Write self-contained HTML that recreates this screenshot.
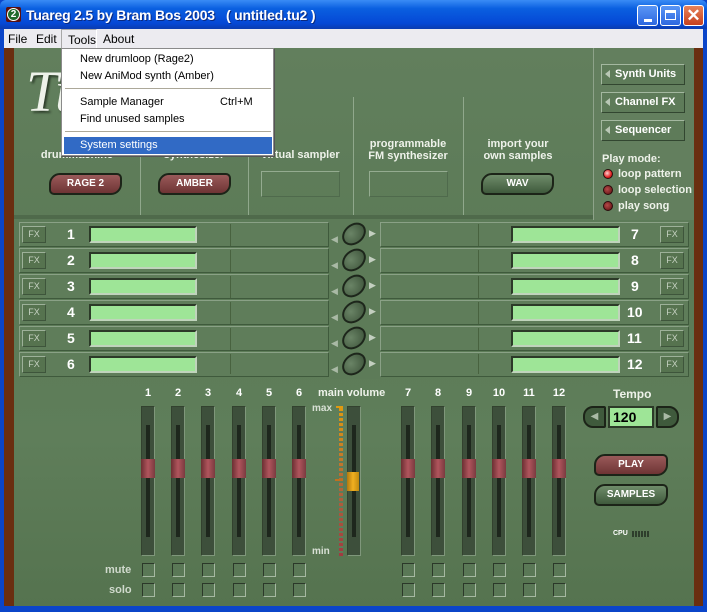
<!DOCTYPE html>
<html><head><meta charset="utf-8"><style>
*{margin:0;padding:0;box-sizing:border-box}
body{width:707px;height:612px;position:relative;overflow:hidden;background:#0b45c9;font-family:"Liberation Sans",sans-serif}
.a{position:absolute}
.t{color:#eef2ea;font-weight:bold;font-size:11px;text-align:center;white-space:nowrap}
.vl{position:absolute;width:1px;background:#90a88c;top:97px;height:118px}
.pill{position:absolute;height:22px;border:2px solid #1c2418;border-radius:11px 5px 11px 5px;color:#fff;font-weight:bold;font-size:10px;text-align:center;line-height:18px}
.red{background:linear-gradient(#9a5a5a,#6e3434)}
.grn{background:linear-gradient(#6f8c6a,#3f5a3c)}
.box{position:absolute;border:1px solid #94ab90;border-bottom-color:#4f6a4c;border-right-color:#4f6a4c}
.row{position:absolute;height:25px;border:1px solid #8aa186;border-right-color:#3f5a3c;border-bottom-color:#3f5a3c;background:#5f7d5a}
.fx{position:absolute;width:24px;height:17px;border:1px solid #9db199;border-right-color:#3e553b;border-bottom-color:#3e553b;color:#c6d2c2;font-size:9px;text-align:center;line-height:15px;background:#56734f}
.gf{position:absolute;height:17px;background:#9ee597;border:2px solid #2c3a28;border-right-color:#c0d4bc;border-bottom-color:#c0d4bc}
.num{position:absolute;color:#fff;font-weight:bold;font-size:14px}
.knob{position:absolute;width:26px;height:20px;border:2px solid #1d261b;border-radius:50%;background:radial-gradient(circle at 40% 35%,#6a8466,#3b5138);transform:rotate(-40deg)}
.track{position:absolute;width:14px;top:406px;height:150px;background:#3d4f3b;border:1px solid #7f977b;border-top-color:#33422f;border-left-color:#33422f}
.track:after{content:"";position:absolute;left:4px;top:18px;width:4px;height:112px;background:#1e271d}
.fk{position:absolute;width:14px;height:19px;top:459px;background:linear-gradient(90deg,#6c2f33,#b0555d,#7a3a3f);z-index:2}
.cb{position:absolute;width:13px;height:14px;border:1px solid #2b3829;border-right-color:#a5b8a1;border-bottom-color:#a5b8a1;background:#5a7856}
.fn{position:absolute;top:387px;color:#fff;font-weight:bold;font-size:11px;width:20px;text-align:center}
.mi{position:absolute;left:80px;font-size:11px;color:#000}
.sb{position:absolute;left:601px;width:84px;height:21px;border:1px solid #a4b8a0;border-right-color:#324630;border-bottom-color:#324630;color:#fff;font-weight:bold;font-size:11px;line-height:19px;padding-left:13px;background:#5e7b59}
.sb:before{content:"";position:absolute;left:3px;top:5px;border:4px solid transparent;border-right:5px solid #b9c7b5;border-left:0}
.led{position:absolute;left:603px;width:10px;height:10px;border-radius:50%;background:radial-gradient(circle at 40% 40%,#b54a4a,#5a0c0c);border:1px solid #2a0a0a}
</style></head><body>
<div class="a" style="left:0;top:0;width:707px;height:29px;background:linear-gradient(#3a8cf5,#0a5fe0 30%,#0548d6 80%,#0a3cb0);border-radius:6px 6px 0 0"></div>
<div class="a" style="left:6px;top:7px;width:15px;height:15px;background:#5a1010;border-radius:2px"></div>
<div class="a" style="left:7px;top:8px;width:13px;height:13px;border-radius:50%;background:#1f6a2a;border:1px solid #fff;color:#fff;font-size:10px;font-weight:bold;text-align:center;line-height:11px">2</div>
<div class="a" style="left:26px;top:7px;color:#fff;font-weight:bold;font-size:14px;letter-spacing:-0.2px;white-space:pre;text-shadow:1px 1px #0a2a80">Tuareg 2.5 by Bram Bos 2003   ( untitled.tu2 )</div>
<div class="a" style="left:637px;top:5px;width:21px;height:21px;border:1px solid #fff;border-radius:3px;background:linear-gradient(#5a96f5,#2d67e0)"><div class="a" style="left:6px;top:13px;width:8px;height:3px;background:#fff"></div></div>
<div class="a" style="left:660px;top:5px;width:21px;height:21px;border:1px solid #fff;border-radius:3px;background:linear-gradient(#5a96f5,#2d67e0)"><div class="a" style="left:4px;top:4px;width:11px;height:10px;border:1px solid #fff;border-top-width:3px"></div></div>
<div class="a" style="left:683px;top:5px;width:21px;height:21px;border:1px solid #fff;border-radius:3px;background:linear-gradient(#e8835a,#c5401e);color:#fff;font-size:17px;font-weight:bold;text-align:center;line-height:19px">✕</div>
<div class="a" style="left:4px;top:29px;width:699px;height:19px;background:#ecebf0"></div>
<div class="a" style="left:8px;top:32px;font-size:12px">File</div>
<div class="a" style="left:36px;top:32px;font-size:12px">Edit</div>
<div class="a" style="left:61px;top:29px;width:36px;height:19px;border:1px solid #a8a8a8;border-right-color:#fff;border-bottom:none;font-size:12px;padding:3px 0 0 6px">Tools</div>
<div class="a" style="left:103px;top:32px;font-size:12px">About</div>
<div class="a" style="left:4px;top:48px;width:10px;height:558px;background:#6a2e10"></div>
<div class="a" style="left:694px;top:48px;width:9px;height:558px;background:#6a2e10"></div>
<div class="a" style="left:14px;top:48px;width:680px;height:558px;background:linear-gradient(#627f5d,#5b7a56 40%,#5f7e5a 70%,#55734f)"></div>
<div class="a" style="left:593px;top:48px;width:101px;height:172px;background:#637f5e;border-left:1px solid #8ea38a"></div>
<div class="a" style="left:14px;top:215px;width:579px;height:4px;background:#4f6a4b"></div>
<div class="a" style="left:26px;top:58px;font-family:'Liberation Serif',serif;font-style:italic;font-size:58px;color:#eef2ea;text-shadow:2px 2px 2px #2d3d2a">Tu</div>
<div class="vl" style="left:140px"></div><div class="vl" style="left:248px"></div><div class="vl" style="left:353px"></div><div class="vl" style="left:463px"></div>
<div class="a t" style="left:14px;top:149px;width:126px">drummachine</div>
<div class="a t" style="left:140px;top:149px;width:108px">synthesizer</div>
<div class="a t" style="left:248px;top:149px;width:105px">virtual sampler</div>
<div class="a t" style="left:353px;top:138px;width:110px;line-height:12px">programmable<br>FM synthesizer</div>
<div class="a t" style="left:463px;top:138px;width:110px;line-height:12px">import your<br>own samples</div>
<div class="pill red" style="left:49px;top:173px;width:73px">RAGE 2</div>
<div class="pill red" style="left:158px;top:173px;width:73px">AMBER</div>
<div class="box" style="left:261px;top:171px;width:79px;height:26px"></div>
<div class="box" style="left:369px;top:171px;width:79px;height:26px"></div>
<div class="pill grn" style="left:481px;top:173px;width:73px">WAV</div>
<div class="sb" style="top:64px">Synth Units</div>
<div class="sb" style="top:92px">Channel FX</div>
<div class="sb" style="top:120px">Sequencer</div>
<div class="a t" style="left:602px;top:153px">Play mode:</div>
<div class="led" style="top:169px;background:radial-gradient(circle at 40% 40%,#ffd0d0,#e02020 60%,#801010)"></div>
<div class="led" style="top:185px"></div><div class="led" style="top:201px"></div>
<div class="a t" style="left:618px;top:168px;text-align:left">loop pattern</div>
<div class="a t" style="left:618px;top:184px;text-align:left">loop selection</div>
<div class="a t" style="left:618px;top:200px;text-align:left">play song</div>
<div class="a" style="left:330px;top:219px;width:50px;height:160px;background:#5d7b58"></div>
<div class="row" style="left:19px;top:222px;width:310px"></div><div class="row" style="left:19px;top:248px;width:310px"></div><div class="row" style="left:19px;top:274px;width:310px"></div><div class="row" style="left:19px;top:300px;width:310px"></div><div class="row" style="left:19px;top:326px;width:310px"></div><div class="row" style="left:19px;top:352px;width:310px"></div>
<div class="row" style="left:380px;top:222px;width:309px"></div><div class="row" style="left:380px;top:248px;width:309px"></div><div class="row" style="left:380px;top:274px;width:309px"></div><div class="row" style="left:380px;top:300px;width:309px"></div><div class="row" style="left:380px;top:326px;width:309px"></div><div class="row" style="left:380px;top:352px;width:309px"></div>
<div class="a" style="left:230px;top:224px;width:1px;height:150px;background:repeating-linear-gradient(#48623f 0 22px,transparent 22px 26px)"></div>
<div class="a" style="left:478px;top:224px;width:1px;height:150px;background:repeating-linear-gradient(#48623f 0 22px,transparent 22px 26px)"></div>
<div class="fx" style="left:22px;top:226px">FX</div><div class="num" style="left:67px;top:226px">1</div><div class="gf" style="left:89px;top:226px;width:108px"></div>
<div class="fx" style="left:22px;top:252px">FX</div><div class="num" style="left:67px;top:252px">2</div><div class="gf" style="left:89px;top:252px;width:108px"></div>
<div class="fx" style="left:22px;top:278px">FX</div><div class="num" style="left:67px;top:278px">3</div><div class="gf" style="left:89px;top:278px;width:108px"></div>
<div class="fx" style="left:22px;top:304px">FX</div><div class="num" style="left:67px;top:304px">4</div><div class="gf" style="left:89px;top:304px;width:108px"></div>
<div class="fx" style="left:22px;top:330px">FX</div><div class="num" style="left:67px;top:330px">5</div><div class="gf" style="left:89px;top:330px;width:108px"></div>
<div class="fx" style="left:22px;top:356px">FX</div><div class="num" style="left:67px;top:356px">6</div><div class="gf" style="left:89px;top:356px;width:108px"></div>
<div class="fx" style="left:660px;top:226px">FX</div><div class="num" style="left:631px;top:226px">7</div><div class="gf" style="left:511px;top:226px;width:109px"></div>
<div class="fx" style="left:660px;top:252px">FX</div><div class="num" style="left:631px;top:252px">8</div><div class="gf" style="left:511px;top:252px;width:109px"></div>
<div class="fx" style="left:660px;top:278px">FX</div><div class="num" style="left:631px;top:278px">9</div><div class="gf" style="left:511px;top:278px;width:109px"></div>
<div class="fx" style="left:660px;top:304px">FX</div><div class="num" style="left:627px;top:304px">10</div><div class="gf" style="left:511px;top:304px;width:109px"></div>
<div class="fx" style="left:660px;top:330px">FX</div><div class="num" style="left:627px;top:330px">11</div><div class="gf" style="left:511px;top:330px;width:109px"></div>
<div class="fx" style="left:660px;top:356px">FX</div><div class="num" style="left:627px;top:356px">12</div><div class="gf" style="left:511px;top:356px;width:109px"></div>
<div class="knob" style="left:341px;top:224px"></div><div class="knob" style="left:341px;top:250px"></div><div class="knob" style="left:341px;top:276px"></div><div class="knob" style="left:341px;top:302px"></div><div class="knob" style="left:341px;top:328px"></div><div class="knob" style="left:341px;top:354px"></div>
<div class="a" style="left:331px;top:226px;color:#a9b9a5;font-size:9px;line-height:26px">◀<br>◀<br>◀<br>◀<br>◀<br>◀</div>
<div class="a" style="left:369px;top:220px;color:#c3cfc0;font-size:9px;line-height:26px">▶<br>▶<br>▶<br>▶<br>▶<br>▶</div>
<div class="fn" style="left:138px">1</div><div class="fn" style="left:168px">2</div><div class="fn" style="left:198px">3</div><div class="fn" style="left:229px">4</div><div class="fn" style="left:259px">5</div><div class="fn" style="left:289px">6</div>
<div class="fn" style="left:398px">7</div><div class="fn" style="left:428px">8</div><div class="fn" style="left:459px">9</div><div class="fn" style="left:489px">10</div><div class="fn" style="left:519px">11</div><div class="fn" style="left:549px">12</div>
<div class="a t" style="left:318px;top:387px">main volume</div>
<div class="track" style="left:141px"></div><div class="track" style="left:171px"></div><div class="track" style="left:201px"></div><div class="track" style="left:232px"></div><div class="track" style="left:262px"></div><div class="track" style="left:292px"></div>
<div class="track" style="left:347px"></div>
<div class="track" style="left:401px"></div><div class="track" style="left:431px"></div><div class="track" style="left:462px"></div><div class="track" style="left:492px"></div><div class="track" style="left:522px"></div><div class="track" style="left:552px"></div>
<div class="fk" style="left:141px"></div><div class="fk" style="left:171px"></div><div class="fk" style="left:201px"></div><div class="fk" style="left:232px"></div><div class="fk" style="left:262px"></div><div class="fk" style="left:292px"></div>
<div class="fk" style="left:401px"></div><div class="fk" style="left:431px"></div><div class="fk" style="left:462px"></div><div class="fk" style="left:492px"></div><div class="fk" style="left:522px"></div><div class="fk" style="left:552px"></div>
<div class="fk" style="left:347px;top:472px;width:12px;background:linear-gradient(90deg,#b07810,#f0b020,#c08a10)"></div>
<div class="a" style="left:339px;top:406px;width:4px;height:150px;background:linear-gradient(#e09a10,#b0603a 60%,#a03a40)"></div>
<div class="a" style="left:339px;top:406px;width:4px;height:150px;background:repeating-linear-gradient(#5e7c59 0 2px,transparent 2px 5px)"></div>
<div class="a" style="left:335px;top:479px;width:8px;height:2px;background:#c07020"></div>
<div class="a" style="left:336px;top:406px;width:7px;height:2px;background:#e09a10"></div>
<div class="a" style="left:312px;top:403px;color:#d8e0d5;font-size:10px;font-weight:bold">max</div>
<div class="a" style="left:312px;top:546px;color:#d8e0d5;font-size:10px;font-weight:bold">min</div>
<div class="a t" style="left:105px;top:564px;color:#d0dacd">mute</div>
<div class="a t" style="left:109px;top:584px;color:#d0dacd">solo</div>
<div class="cb" style="left:142px;top:563px"></div><div class="cb" style="left:172px;top:563px"></div><div class="cb" style="left:202px;top:563px"></div><div class="cb" style="left:233px;top:563px"></div><div class="cb" style="left:263px;top:563px"></div><div class="cb" style="left:293px;top:563px"></div>
<div class="cb" style="left:402px;top:563px"></div><div class="cb" style="left:432px;top:563px"></div><div class="cb" style="left:463px;top:563px"></div><div class="cb" style="left:493px;top:563px"></div><div class="cb" style="left:523px;top:563px"></div><div class="cb" style="left:553px;top:563px"></div>
<div class="cb" style="left:142px;top:583px"></div><div class="cb" style="left:172px;top:583px"></div><div class="cb" style="left:202px;top:583px"></div><div class="cb" style="left:233px;top:583px"></div><div class="cb" style="left:263px;top:583px"></div><div class="cb" style="left:293px;top:583px"></div>
<div class="cb" style="left:402px;top:583px"></div><div class="cb" style="left:432px;top:583px"></div><div class="cb" style="left:463px;top:583px"></div><div class="cb" style="left:493px;top:583px"></div><div class="cb" style="left:523px;top:583px"></div><div class="cb" style="left:553px;top:583px"></div>
<div class="a t" style="left:613px;top:387px;font-size:12px">Tempo</div>
<div class="a" style="left:583px;top:406px;width:23px;height:22px;border:2px solid #1c2418;border-radius:10px 2px 2px 10px;background:#3f5a3c;color:#a9b9a5;font-size:10px;line-height:18px;text-align:center">◀</div>
<div class="a" style="left:608px;top:406px;width:46px;height:22px;background:#9ee597;border:2px solid #2c3a28;font-weight:bold;font-size:14px;line-height:18px;padding-left:3px">120</div>
<div class="a" style="left:656px;top:406px;width:23px;height:22px;border:2px solid #1c2418;border-radius:2px 10px 10px 2px;background:#3f5a3c;color:#a9b9a5;font-size:10px;line-height:18px;text-align:center">▶</div>
<div class="pill red" style="left:594px;top:454px;width:74px">PLAY</div>
<div class="pill grn" style="left:594px;top:484px;width:74px">SAMPLES</div>
<div class="a" style="left:613px;top:530px;color:#fff;font-size:7px;font-weight:bold">CPU</div>
<div class="a" style="left:632px;top:531px;width:18px;height:6px;background:repeating-linear-gradient(90deg,#2e3e2c 0 2px,transparent 2px 3px)"></div>
<div class="a" style="left:0;top:606px;width:707px;height:6px;background:#0b45c9"></div>
<div class="a" style="left:61px;top:48px;width:213px;height:108px;background:#fff;border:1px solid #8a8a8a;box-shadow:1px 1px 0 #555"></div>
<div class="mi" style="top:53px">New drumloop (Rage2)</div>
<div class="mi" style="top:70px">New AniMod synth (Amber)</div>
<div class="a" style="left:65px;top:88px;width:206px;height:1px;background:#aca899"></div>
<div class="mi" style="top:96px">Sample Manager</div>
<div class="a" style="left:220px;top:96px;font-size:11px">Ctrl+M</div>
<div class="mi" style="top:113px">Find unused samples</div>
<div class="a" style="left:65px;top:131px;width:206px;height:1px;background:#aca899"></div>
<div class="a" style="left:64px;top:137px;width:208px;height:17px;background:#316ac5"></div>
<div class="mi" style="top:139px;color:#fff">System settings</div>
</body></html>
